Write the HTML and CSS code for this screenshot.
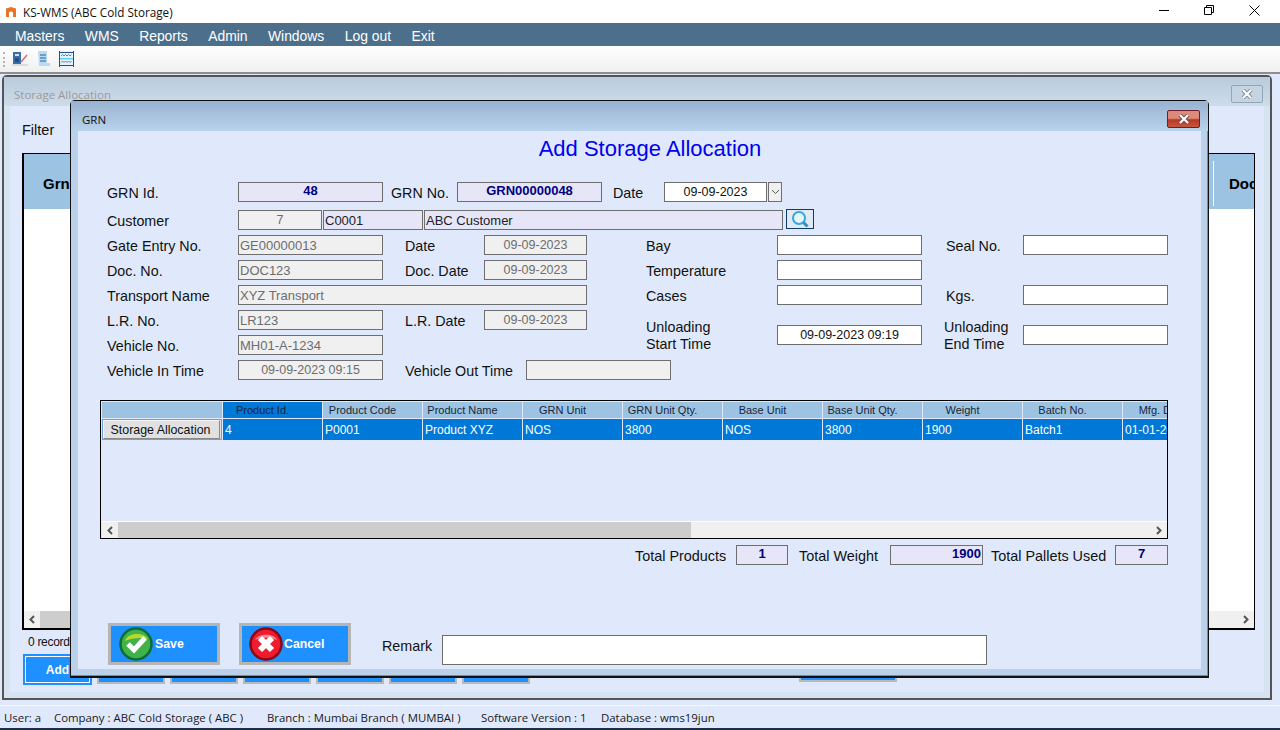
FILE: index.html
```html
<!DOCTYPE html>
<html lang="en">
<head>
<meta charset="utf-8">
<title>KS-WMS (ABC Cold Storage)</title>
<link rel="stylesheet" href="styles.css">
</head>
<body>
<div class="app">
  <header class="titlebar">
    <svg class="logo" width="12" height="12" viewBox="0 0 12 12"><path d="M1 11V2.500L6 1l5 1.500V11H8V6.500Q6 4.500 4 6.500V11z" fill="#e8742a"/></svg>
    <span class="app-title">KS-WMS (ABC Cold Storage)</span>
    <div class="winctl">
      <svg width="11" height="11" viewBox="0 0 11 11"><path d="M0 5.500h10" stroke="#000" fill="none"/></svg>
      <svg width="11" height="11" viewBox="0 0 11 11"><path d="M.5 2.500h7v7h-7zM2.500 2.500v-2h7v7h-2" stroke="#000" fill="none"/></svg>
      <svg width="11" height="11" viewBox="0 0 11 11"><path d="M.5.500l10 10M10.500.500l-10 10" stroke="#000" fill="none"/></svg>
    </div>
  </header>
  <nav class="menubar">
    <span>Masters</span><span>WMS</span><span>Reports</span><span>Admin</span><span>Windows</span><span>Log out</span><span>Exit</span>
  </nav>
  <div class="toolbar">
    <span class="grip"></span>
    <svg width="17" height="16" viewBox="0 0 17 16"><rect x="1" y="1" width="8" height="12" fill="#3a6ea5"/><rect x="3" y="3" width="4" height="2" fill="#cfe0f2"/><rect x="3" y="7" width="4" height="4" fill="#1f4f86"/><path d="M9 11l6-7" stroke="#e0666c" stroke-width="1.500"/><rect x="0" y="13" width="16" height="2" fill="#dcdcdc"/></svg>
    <svg width="14" height="16" viewBox="0 0 14 16"><path d="M1 0h9v12h3v3H2z" fill="#b6dcf5"/><path d="M3 4h6M3 7h6M3 10h6" stroke="#2c5f96"/></svg>
    <svg width="15" height="16" viewBox="0 0 15 16"><rect x="0" y="0" width="15" height="16" fill="#e6f1fb"/><path d="M.5 0v16M14.500 0v16" stroke="#2b4a94"/><path d="M1 1.500h13M1 14.500h13" stroke="#2b4a94"/><path d="M2 5l1.500-1.500L5 5l1.500-1.500L8 5l1.500-1.500L11 5l1.500-1.500M2 11.500l1.500-1.500L5 11.500 6.500 10 8 11.500 9.500 10 11 11.500 12.500 10" fill="none" stroke="#5d83ac"/><rect x="1" y="7" width="13" height="1.500" fill="#5ed0f0"/></svg>
  </div>

  <main class="desktop">
    <section class="child">
      <div class="child-title">
        <span>Storage Allocation</span>
        <span class="child-close"><svg width="16" height="10" viewBox="0 0 16 10"><path d="M4 1l8 8M12 1L4 9" stroke="#7d8994" stroke-width="4"/><path d="M4 1l8 8M12 1L4 9" stroke="#fff" stroke-width="2.200"/></svg></span>
      </div>
      <div class="child-client">
        <div class="filter">Filter</div>
        <div class="bg-grid">
          <div class="bg-head"><span>Grn</span><span class="bg-doc">Doc</span></div>
          <div class="bg-body"></div>
          <div class="bg-scroll">
            <span class="arrow"><svg width="6" height="9" viewBox="0 0 6 9"><path d="M5 1L1.500 4.500 5 8" fill="none" stroke="#555" stroke-width="2"/></svg></span>
            <span class="bg-thumb"></span>
            <span class="arrow"><svg width="6" height="9" viewBox="0 0 6 9"><path d="M1 1l3.500 3.500L1 8" fill="none" stroke="#555" stroke-width="2"/></svg></span>
          </div>
        </div>
        <div class="records">0 records</div>
        <div class="bg-actions">
          <span class="bg-btn add">Add</span>
          <span class="bg-btn"></span><span class="bg-btn"></span><span class="bg-btn"></span><span class="bg-btn"></span><span class="bg-btn"></span><span class="bg-btn"></span>
          <span class="bg-btn wide"></span>
        </div>
      </div>
    </section>

    <section class="dialog">
      <div class="dlg-title">
        <span>GRN</span>
        <span class="dlg-close"><svg width="16" height="10" viewBox="0 0 16 10"><path d="M4 1l8 8M12 1L4 9" stroke="#6f4a4a" stroke-width="4"/><path d="M4 1l8 8M12 1L4 9" stroke="#fff" stroke-width="2.200"/></svg></span>
      </div>
      <div class="client">
        <h1 class="heading">Add Storage Allocation</h1>
        <div class="form">
          <div class="row r-first">
            <label class="lab-a">GRN Id.</label>
            <div class="fld w145 key">48</div>
            <label class="lab-c">GRN No.</label>
            <div class="fld w145 key">GRN00000048</div>
            <label class="lab-d">Date</label>
            <div class="fld w103 edit ctr">09-09-2023</div>
            <div class="drop"><svg width="9" height="6" viewBox="0 0 9 6"><path d="M1 1l3.500 3.500L8 1" fill="none" stroke="#555"/></svg></div>
          </div>
          <div class="row r-second">
            <label class="lab-a">Customer</label>
            <div class="fld w84 off ctr">7</div>
            <div class="fld w100 cust">C0001</div>
            <div class="fld w359 cust">ABC Customer</div>
            <div class="search"><svg width="22" height="18" viewBox="0 0 22 18"><circle cx="10" cy="8" r="6" fill="#e6f6fd" stroke="#37a6dc" stroke-width="2"/><path d="M14.500 12.500l4 4" stroke="#2f8fc4" stroke-width="3"/></svg></div>
          </div>
          <div class="lower">
            <div class="stack">
              <div class="row"><label class="lab-a">Gate Entry No.</label><div class="fld w145 off txt">GE00000013</div><label class="lab-b">Date</label><div class="fld w103 off ctr">09-09-2023</div></div>
              <div class="row"><label class="lab-a">Doc. No.</label><div class="fld w145 off txt">DOC123</div><label class="lab-b">Doc. Date</label><div class="fld w103 off ctr">09-09-2023</div></div>
              <div class="row"><label class="lab-a">Transport Name</label><div class="fld w349 off txt">XYZ Transport</div></div>
              <div class="row"><label class="lab-a">L.R. No.</label><div class="fld w145 off txt">LR123</div><label class="lab-b">L.R. Date</label><div class="fld w103 off ctr">09-09-2023</div></div>
              <div class="row"><label class="lab-a">Vehicle No.</label><div class="fld w145 off txt">MH01-A-1234</div></div>
            </div>
            <div class="stack">
              <div class="row"><label class="lab-a">Bay</label><div class="fld w145 edit"></div><label class="lab-e">Seal No.</label><div class="fld w145 edit"></div></div>
              <div class="row"><label class="lab-a">Temperature</label><div class="fld w145 edit"></div></div>
              <div class="row"><label class="lab-a">Cases</label><div class="fld w145 edit"></div><label class="lab-e">Kgs.</label><div class="fld w145 edit"></div></div>
              <div class="row tall"><label class="lab-a">Unloading<br>Start Time</label><div class="fld w145 edit ctr">09-09-2023 09:19</div><label class="lab-f">Unloading<br>End Time</label><div class="fld w145 edit"></div></div>
            </div>
          </div>
          <div class="row r-last">
            <label class="lab-a">Vehicle In Time</label><div class="fld w145 off ctr">09-09-2023 09:15</div><label class="lab-g">Vehicle Out Time</label><div class="fld w145 off"></div>
          </div>
        </div>

        <div class="grid">
          <div class="g-head">
            <span class="c0"></span><span class="cur">Product Id.</span><span>Product Code</span><span>Product Name</span><span>GRN Unit</span><span>GRN Unit Qty.</span><span>Base Unit</span><span>Base Unit Qty.</span><span>Weight</span><span>Batch No.</span><span>Mfg. Date</span>
          </div>
          <div class="g-row">
            <span class="c0"><b class="cell-btn">Storage Allocation</b></span><span>4</span><span>P0001</span><span>Product XYZ</span><span>NOS</span><span>3800</span><span>NOS</span><span>3800</span><span>1900</span><span>Batch1</span><span>01-01-2023</span>
          </div>
          <div class="g-empty"></div>
          <div class="g-scroll">
            <span class="arrow"><svg width="6" height="9" viewBox="0 0 6 9"><path d="M5 1L1.500 4.500 5 8" fill="none" stroke="#555" stroke-width="2"/></svg></span>
            <span class="g-thumb"></span>
            <span class="arrow"><svg width="6" height="9" viewBox="0 0 6 9"><path d="M1 1l3.500 3.500L1 8" fill="none" stroke="#555" stroke-width="2"/></svg></span>
          </div>
        </div>

        <div class="totals">
          <label class="t1">Total Products</label><div class="fld t-box1 key ctr">1</div>
          <label class="t2">Total Weight</label><div class="fld t-box2 key">1900</div>
          <label class="t3">Total Pallets Used</label><div class="fld t-box3 key ctr">7</div>
        </div>

        <div class="actions">
          <button class="btn" type="button">
            <svg width="34" height="34" viewBox="0 0 34 34"><circle cx="17" cy="17" r="15.500" fill="#3fb34a" stroke="#0d6b33" stroke-width="2.500"/><path d="M6 14C8 6 24 4 29 12 22 10 12 11 6 14z" fill="#bcd82e"/><path d="M9 17l6 6L26 11" fill="none" stroke="#fff" stroke-width="5"/></svg>
            <span>Save</span>
          </button>
          <button class="btn cancel" type="button">
            <svg width="34" height="34" viewBox="0 0 34 34"><circle cx="17" cy="17" r="15.500" fill="#ee1c2e" stroke="#8c0712" stroke-width="2.500"/><path d="M6 13C9 6 25 6 28 13 22 10 12 10 6 13z" fill="#f48a90"/><path d="M11 11l12 12M23 11L11 23" stroke="#fff" stroke-width="6"/></svg>
            <span>Cancel</span>
          </button>
          <label class="remark-lab">Remark</label>
          <div class="fld remark edit"></div>
        </div>
      </div>
    </section>
  </main>

  <footer class="status">
    <span class="s1">User: a</span><span class="s2">Company : ABC Cold Storage ( ABC )</span><span class="s3">Branch : Mumbai Branch ( MUMBAI )</span><span class="s4">Software Version : 1</span><span>Database : wms19jun</span>
  </footer>
</div>
</body>
</html>
```

FILE: styles.css
```css
* { box-sizing: border-box; }
html, body { margin: 0; height: 100%; overflow: hidden; }
body { font-family: "Liberation Sans", Arial, sans-serif; font-size: 14.300px; color: #111; }
.app { width: 1280px; height: 730px; display: flex; flex-direction: column; background: #e0e9fb; }

.titlebar { height: 23px; background: #fff; display: flex; align-items: center; padding-left: 5px; flex: none; }
.logo { margin-right: 6px; }
.app-title { font-family: "Open Sans", sans-serif; font-size: 11.700px; color: #111; }
.winctl { margin-left: auto; margin-bottom: 3px; display: flex; gap: 34px; padding-right: 20px; align-items: center; }

.menubar { height: 23px; background: #4c6f8c; display: flex; gap: 20.400px; padding: 2px 0 0 15px; align-items: center; color: #fff; font-size: 13.900px; flex: none; }

.toolbar { height: 28px; flex: none; display: flex; align-items: center; gap: 8px; padding: 0 0 0 12px; position: relative;
  background: linear-gradient(#fff, #f0f0f0); border-bottom: 2px solid #8e8e8e; }
.grip { position: absolute; left: 3px; top: 6px; height: 15px; width: 2px; border-left: 2px dotted #b5b5b5; }

.desktop { flex: 1; position: relative; }

.child { position: absolute; left: 2px; top: 1px; width: 1270px; height: 625px; border: 2px solid #555; border-radius: 5px 5px 0 0; background: #d6e3f1; display: flex; flex-direction: column; padding: 0 6px 6px; }
.child-title { height: 29px; flex: none; margin: 0 -6px; padding: 10px 0 0 10px; background: linear-gradient(#b9cbda, #cedcea); color: #9a9a9a; font-family: "Open Sans", sans-serif; font-size: 11.500px; position: relative; }
.child-close { position: absolute; right: 7px; top: 8px; width: 32px; height: 18px; border: 1px solid #93a5b8; border-radius: 2px; background: #c5d4e3; display: flex; align-items: center; justify-content: center; }
.child-client { flex: 1; background: #e0e9fb; padding: 0 9px 0 12px; display: flex; flex-direction: column; min-height: 0; }
.filter { height: 47px; padding-top: 16px; font-size: 14.500px; }
.bg-grid { height: 477px; border: 1px solid #000; border-width: 1px 1px 2px 2px; display: flex; flex-direction: column; background: #fff; flex: none; }
.bg-head { height: 55px; flex: none; background: #9dc3e3; display: flex; justify-content: space-between; align-items: center; padding: 2px 0 0 19px; font-weight: bold; font-size: 15px; overflow: hidden; border-top: 1px solid #9dc3e3; color: #000; }
.bg-doc { width: 41px; flex: none; padding-left: 15px; border-left: 1px solid #fff; height: 45px; line-height: 45px; overflow: hidden; }
.bg-body { flex: 1; }
.bg-scroll { height: 17px; background: #f0f0f0; display: flex; align-items: center; }
.bg-thumb { flex: 1; height: 17px; background: #cdcdcd; margin-right: 40px; }
.arrow { width: 16px; height: 14px; flex: none; display: flex; align-items: center; justify-content: center; }
.records { font-size: 12px; height: 24px; padding: 5px 0 0 6px; letter-spacing: -.3px; }
.bg-actions { display: flex; gap: 5px; align-items: flex-start; padding-left: 1px; }
.bg-btn { width: 68px; height: 30px; background: #1e90ff; border: 2px solid #b9b9b9; }
.bg-btn.add { width: 69px; height: 31px; color: #fff; font-weight: bold; font-size: 12px; border: 2px solid #1e90ff; outline: 1px solid #fff; outline-offset: -3px; display: flex; align-items: center; justify-content: center; }
.bg-btn.wide { width: 98px; height: 28px; margin-left: 264px; }

.dialog { position: absolute; left: 70px; top: 26px; width: 1139px; height: 578px; border: 1px solid #111; border-bottom: 2px solid #111; border-radius: 5px 5px 0 0; background: #bbd1ea; box-shadow: inset 0 -1px 0 #12b5d8, inset -1px 0 0 #12b5d8; display: flex; flex-direction: column; padding: 0 7px 7px; }
.dlg-title { height: 30px; flex: none; margin: 0 -7px; padding: 11px 0 0 11px; background: linear-gradient(#98b3d2, #b9d2ec); font-family: "Open Sans", sans-serif; font-size: 11.500px; color: #111; position: relative; }
.dlg-close { position: absolute; right: 8px; top: 9px; width: 33px; height: 18px; border: 1px solid #6b1f2b; border-radius: 2px; background: linear-gradient(#dc8a7c 0 45%, #b63a26 55%, #c9543f); display: flex; align-items: center; justify-content: center; }
.client { flex: 1; background: #e0e9fb; padding-left: 22px; min-height: 0; }

.heading { margin: 5px 0 0; width: 1100px; height: 30px; line-height: 26px; font-size: 22px; font-weight: normal; color: #0000ee; text-align: center; }
.form { margin: 16px 0 0 7px; }
.row { display: flex; align-items: center; height: 20px; flex: none; white-space: nowrap; }
label { padding-top: 2px; }
.r-second { margin-top: 8px; }
.lower { display: grid; grid-template-columns: 539px 1fr; margin-top: 5px; height: 120px; }
.stack { display: flex; flex-direction: column; gap: 5px; }
.row.tall { height: 34px; margin-top: 8px; line-height: 17px; }
.r-last { margin-top: 5px; }
.lab-a { width: 131px; flex: none; }
.lab-b { width: 79px; margin-left: 22px; flex: none; }
.lab-c { width: 66px; margin-left: 8px; flex: none; }
.lab-d { width: 51px; margin-left: 11px; flex: none; }
.lab-e { width: 77px; margin-left: 24px; flex: none; }
.lab-f { width: 79px; margin-left: 22px; flex: none; }
.lab-g { width: 121px; margin-left: 22px; flex: none; }

.fld { height: 20px; border: 1px solid #6e6e6e; line-height: 19px; padding: 0 1px; flex: none; overflow: hidden; font-size: 12.500px; }
.w84 { width: 84px; } .w100 { width: 100px; margin-left: 1px; } .w359 { width: 359px; margin-left: 1px; }
.w103 { width: 103px; } .w145 { width: 145px; } .w349 { width: 349px; }
.off { background: #f0f0f0; color: #6d6d6d; }
.txt { font-size: 13px; }
.edit { background: #fff; color: #111; }
.key { background: #e6e6f8; color: #000080; font-weight: bold; text-align: center; font-size: 13px; line-height: 16px; }
.cust { background: #e6e6f8; color: #222; font-size: 13px; }
.ctr { text-align: center; }
.drop { width: 14px; height: 20px; margin-left: 1px; border: 1px solid #6e6e6e; background: #f0f0f0; display: flex; align-items: center; justify-content: center; }
.search { width: 28px; height: 20px; margin: -2px 0 0 3px; border: 1px solid #0f3a6e; background: #dfeaf5; display: flex; align-items: center; justify-content: center; }

.grid { margin-top: 20px; width: 1068px; height: 139px; border: 1px solid #000; padding: 1px 0 0 1px; display: flex; flex-direction: column; overflow: hidden; }
.g-head, .g-row { display: flex; flex: none; }
.g-head span, .g-row span { width: 100px; flex: none; white-space: nowrap; overflow: hidden; }
.g-head span.c0, .g-row span.c0 { width: 120px; }
.g-head { height: 16px; margin-bottom: 1px; font-size: 11px; line-height: 16px; color: #16263a; }
.g-head span { background: #9dc3e3; text-align: center; padding-right: 20px; border-left: 1px solid #e0e9fb; }
.g-head span.c0 { border-left: 0; padding: 0; }
.g-head span.cur { background: #0078d7; }
.g-row { height: 21px; font-size: 12px; line-height: 22px; color: #fff; }
.g-row span { background: #0078d7; padding-left: 2px; border-left: 1px solid #e0e9fb; }
.g-row span.c0 { padding: 0 1px 0 0; background: #e1e1e1; border: 1px solid #6aa3d8; }
.cell-btn { display: block; height: 19px; padding-right: 2px; font-weight: normal; font-size: 12.400px; color: #111; background: #e1e1e1; border: 1px solid #f5f5f5; border-right-color: #888; border-bottom-color: #888; text-align: center; line-height: 18px; overflow: hidden; }
.g-empty { flex: 1; }
.g-scroll { height: 17px; flex: none; display: flex; align-items: center; background: #f0f0f0; border-top: 1px solid #fff; }
.g-thumb { width: 573px; height: 16px; background: #cdcdcd; margin-right: auto; }

.totals { display: flex; align-items: center; margin: 6px 0 0; height: 20px; white-space: nowrap; font-size: 14.400px; }
.t1 { margin-left: 535px; width: 101px; }
.t2 { margin-left: 11px; width: 91px; }
.t3 { margin-left: 8px; width: 124px; }
.t-box1 { width: 52px; } .t-box2 { width: 93px; text-align: right; } .t-box3 { width: 53px; }

.actions { display: flex; align-items: flex-end; margin: 58px 0 0 8px; height: 42px; }
.btn { width: 112px; height: 42px; padding: 0 0 0 8px; border: 3px solid #b5b5b5; background: #1e90ff; color: #fff; font: bold 12.300px "Liberation Sans", Arial, sans-serif; display: flex; align-items: center; }
.btn svg { flex: none; }
.btn span { margin-left: 2px; }
.btn.cancel { margin-left: 19px; padding-left: 7px; }
.btn.cancel span { margin-left: 1px; }
.remark-lab { width: 60px; margin-left: 31px; line-height: 20px; height: 30px; flex: none; padding-top: 1px; }
.remark { width: 545px; height: 30px; }

.status { height: 25px; margin-top: auto; flex: none; border-top: 1px solid #f5f7fb; border-bottom: 2px solid #1b2e45; background: #e0e9fb; display: flex; align-items: center; padding-left: 4px; font-family: "Open Sans", sans-serif; font-size: 11.400px; color: #1a1a1a; white-space: nowrap; }
.s1 { width: 50px; } .s2 { width: 213px; } .s3 { width: 214px; } .s4 { width: 120px; }
```
